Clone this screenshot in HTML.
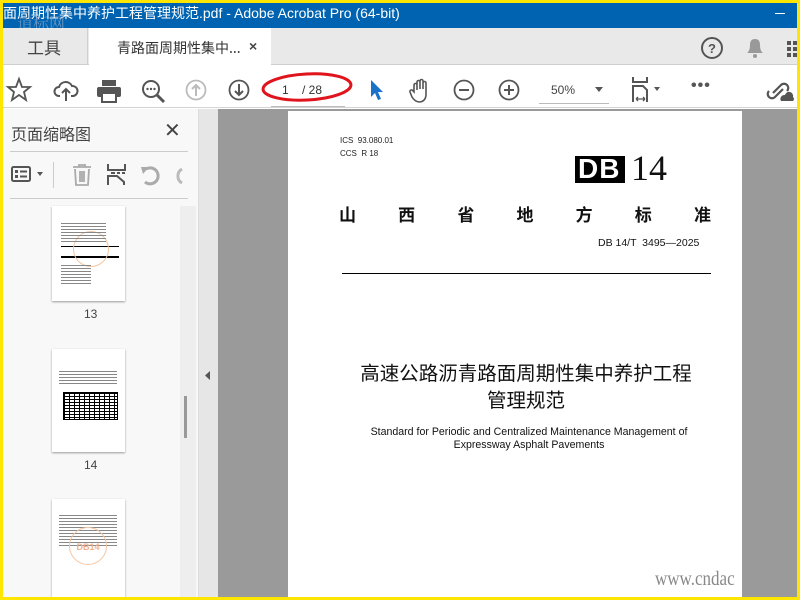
<!DOCTYPE html>
<html><head><meta charset="utf-8"><style>
*{margin:0;padding:0;box-sizing:border-box}
body{width:800px;height:600px;overflow:hidden;background:#ffe600;position:relative;font-family:"Liberation Sans","Noto Sans CJK SC",sans-serif}
.a{position:absolute}
svg{position:absolute;overflow:visible}
.cjk{font-family:"Noto Sans CJK SC","WenQuanYi Zen Hei",sans-serif}
</style></head><body>
<div class="a" style="left:3px;top:3px;width:794px;height:594px;background:#fff;overflow:hidden">
 <div class="a" style="left:0;top:0;width:794px;height:25px;background:#0063b1;color:#fff;font-size:14px;line-height:21px;white-space:nowrap" ><span class="cjk" style="font-size:14px">面周期性集中养护工程管理规范</span>.pdf - Adobe Acrobat Pro (64-bit)</div>
 <div class="a" style="left:14px;top:8px;color:#8ea8c8;font-size:16px;font-family:'Noto Serif CJK SC',serif;opacity:.7">道标网</div>
 <div class="a" style="left:772px;top:10px;width:10px;height:1px;background:#fff"></div>
 <div class="a" style="left:0;top:25px;width:794px;height:37px;background:#e9e9e9;border-bottom:1px solid #cfcfcf"></div>
 <div class="a" style="left:0;top:25px;width:85px;height:37px;border-right:1px solid #d0d0d0"></div>
 <div class="a cjk" style="left:24px;top:31px;font-size:17px;color:#444">工具</div>
 <div class="a" style="left:86px;top:25px;width:182px;height:38px;background:#fff"></div>
 <div class="a cjk" style="left:114px;top:35px;font-size:14px;color:#333">青路面周期性集中...</div>
 <div class="a" style="left:246px;top:35px;font-size:14px;color:#444;font-weight:bold">×</div>
 <svg style="left:698px;top:34px" width="24" height="24"><circle cx="11" cy="11" r="10" fill="none" stroke="#555" stroke-width="2"/><text x="11" y="16" text-anchor="middle" font-size="13" font-weight="bold" fill="#555" font-family="Liberation Sans">?</text></svg>
 <svg style="left:742px;top:34px" width="20" height="22"><path d="M2 16 Q5 14 5 8 Q5 2 10 2 Q15 2 15 8 Q15 14 18 16Z" fill="#999"/><circle cx="10" cy="19" r="2" fill="#999"/></svg>
 <svg style="left:784px;top:38px" width="10" height="16"><rect x="0" y="0" width="4" height="4" fill="#555"/><rect x="6" y="0" width="4" height="4" fill="#555"/><rect x="0" y="6" width="4" height="4" fill="#555"/><rect x="6" y="6" width="4" height="4" fill="#555"/><rect x="0" y="12" width="4" height="4" fill="#555"/><rect x="6" y="12" width="4" height="4" fill="#555"/></svg>
 <div class="a" style="left:0;top:63px;width:794px;height:42px;background:#fff;border-bottom:1px solid #d4d4d4"></div>
 <svg style="left:4px;top:75px" width="26" height="24"><path d="M12 1 L15 9 L23 9 L17 14 L19 22 L12 17 L5 22 L7 14 L1 9 L9 9Z" fill="none" stroke="#555" stroke-width="1.8"/></svg>
 <svg style="left:51px;top:77px" width="24" height="22"><path d="M6 16 H5 A4.5 4.5 0 0 1 5 7 A7 7 0 0 1 18 6 A5 5 0 0 1 19 16 H17" fill="none" stroke="#555" stroke-width="2"/><path d="M12 21 V10 M8 13 L12 9 L16 13" fill="none" stroke="#555" stroke-width="2"/></svg>
 <svg style="left:94px;top:77px" width="24" height="22"><rect x="5" y="0" width="14" height="6" fill="#555"/><rect x="0" y="7" width="24" height="10" rx="2" fill="#555"/><rect x="5" y="13" width="14" height="9" fill="#fff" stroke="#555" stroke-width="2"/></svg>
 <svg style="left:138px;top:76px" width="26" height="26"><circle cx="10" cy="10" r="8" fill="none" stroke="#555" stroke-width="2"/><path d="M16 16 L23 23" stroke="#555" stroke-width="3"/><circle cx="6.5" cy="10" r="1.2" fill="#555"/><circle cx="10" cy="10" r="1.2" fill="#555"/><circle cx="13.5" cy="10" r="1.2" fill="#555"/></svg>
 <svg style="left:183px;top:77px" width="22" height="22"><circle cx="10" cy="10" r="9.5" fill="none" stroke="#bbb" stroke-width="1.8"/><path d="M10 16 V5 M6 9 L10 5 L14 9" fill="none" stroke="#bbb" stroke-width="2"/></svg>
 <svg style="left:226px;top:77px" width="22" height="22"><circle cx="10" cy="10" r="9.5" fill="none" stroke="#555" stroke-width="1.8"/><path d="M10 4 V15 M6 11 L10 15 L14 11" fill="none" stroke="#555" stroke-width="2"/></svg>
 <div class="a" style="left:268px;top:103px;width:74px;height:1px;background:#bbb"></div>
 <div class="a" style="left:279px;top:80px;font-size:12px;color:#333">1</div>
 <div class="a" style="left:299px;top:80px;font-size:12px;color:#333">/ 28</div>
 <svg style="left:258px;top:68px" width="96" height="32"><ellipse cx="46" cy="16" rx="44" ry="13" fill="none" stroke="#e0141c" stroke-width="3" transform="rotate(-3 46 16)"/></svg>
 <svg style="left:366px;top:76px" width="16" height="22"><path d="M2 1 L2 18 L6 14 L9 21 L12 20 L9 13 L14 13Z" fill="#1a73c8"/></svg>
 <svg style="left:406px;top:75px" width="24" height="26"><path d="M5 14 V7 a1.5 1.5 0 0 1 3 0 V12 V4 a1.5 1.5 0 0 1 3 0 V11 V3 a1.5 1.5 0 0 1 3 0 V11 V5 a1.5 1.5 0 0 1 3 0 V16 Q17 23 11 24 Q6 24 3 19 L1 14 a1.5 1.5 0 0 1 3 -1Z" fill="none" stroke="#555" stroke-width="1.6"/></svg>
 <svg style="left:451px;top:77px" width="22" height="22"><circle cx="10" cy="10" r="9.5" fill="none" stroke="#555" stroke-width="1.8"/><path d="M5 10 H15" stroke="#555" stroke-width="2"/></svg>
 <svg style="left:496px;top:77px" width="22" height="22"><circle cx="10" cy="10" r="9.5" fill="none" stroke="#555" stroke-width="1.8"/><path d="M5 10 H15 M10 5 V15" stroke="#555" stroke-width="2"/></svg>
 <div class="a" style="left:548px;top:80px;font-size:12px;color:#444">50%</div>
 <svg style="left:592px;top:84px" width="10" height="6"><path d="M0 0 H8 L4 5Z" fill="#555"/></svg>
 <div class="a" style="left:536px;top:100px;width:70px;height:1px;background:#bbb"></div>
 <svg style="left:629px;top:74px" width="32" height="26"><path d="M1 0 V5 H15 V0" fill="none" stroke="#555" stroke-width="2"/><path d="M1 25 V9 H11 L15 13 V25" fill="none" stroke="#555" stroke-width="2"/><path d="M4 22 H13 M4 22 L6 20 M4 22 L6 24 M13 22 L11 20 M13 22 L11 24" stroke="#555" stroke-width="1.3"/><path d="M22 10 H28 L25 14Z" fill="#555"/></svg>
 <div class="a" style="left:688px;top:74px;font-size:16px;color:#555;letter-spacing:1px;font-weight:bold">•••</div>
 <svg style="left:766px;top:76px" width="26" height="24"><path d="M4 14 L12 6 a4 4 0 0 1 6 6 M14 10 L6 18 a4 4 0 0 1 -6 -6" fill="none" stroke="#555" stroke-width="2.2"/><path d="M12 22 a4 4 0 0 1 4 -6 a4 4 0 0 1 8 2 a2.5 2.5 0 0 1 0 4Z" fill="#555"/></svg>
 <div class="a" style="left:0;top:106px;width:195px;height:488px;background:#f8f8f8"></div>
 <div class="a cjk" style="left:8px;top:118px;font-size:16px;color:#444">页面缩略图</div>
 <div class="a" style="left:161px;top:115px;font-size:20px;color:#444">✕</div>
 <div class="a" style="left:7px;top:148px;width:178px;height:1px;background:#ccc"></div>
 <div class="a" style="left:7px;top:195px;width:178px;height:1px;background:#ccc"></div>
 <div class="a" style="left:50px;top:159px;width:1px;height:26px;background:#ccc"></div>
 <svg style="left:8px;top:163px" width="36" height="18"><rect x="1" y="1" width="18" height="14" rx="1.5" fill="none" stroke="#555" stroke-width="2"/><rect x="4" y="4" width="3" height="3" fill="#555"/><rect x="4" y="9" width="3" height="3" fill="#555"/><path d="M9 5.5 H16 M9 10.5 H16" stroke="#555" stroke-width="2"/><path d="M26 6 H32 L29 10Z" fill="#555"/></svg>
 <svg style="left:69px;top:161px" width="20" height="22"><path d="M1 3 H19 M7 3 V1 H13 V3 M3 5 L4 21 H16 L17 5 M8 7 V18 M10 7 V18 M12 7 V18" fill="none" stroke="#aaa" stroke-width="1.8"/></svg>
 <svg style="left:104px;top:161px" width="20" height="22"><path d="M1 0 V6 H18 V0" fill="none" stroke="#555" stroke-width="2"/><path d="M4 9 H8 M10 9 H13 M15 9 H18" stroke="#555" stroke-width="2"/><path d="M1 21 V12 H10 L17 18 V21" fill="none" stroke="#555" stroke-width="2"/></svg>
 <svg style="left:137px;top:163px" width="22" height="20"><path d="M6 3 A8 8 0 1 1 5 16" fill="none" stroke="#aaa" stroke-width="3"/><path d="M1 1 L9 1 L3 8Z" fill="#aaa"/></svg>
 <svg style="left:170px;top:163px" width="10" height="20"><path d="M9 3 A8 8 0 0 0 9 17" fill="none" stroke="#bbb" stroke-width="3"/></svg>
 <div class="a" style="left:177px;top:203px;width:16px;height:391px;background:#eee"></div>
 <div class="a" style="left:181px;top:393px;width:3px;height:42px;background:#999"></div>
 <div class="a" style="left:49px;top:203px;width:73px;height:95px;background:#fff;box-shadow:0 1px 2px #999"></div>
 <div class="a" style="left:58px;top:243px;width:58px;height:12px;border-top:1px solid #000;border-bottom:2px solid #000"></div>
 <div class="a" style="left:70px;top:228px;width:36px;height:36px;border:1px solid #f3c6a0;border-radius:50%"></div>
 <div class="a" style="left:58px;top:220px;width:45px;height:20px;background:repeating-linear-gradient(#888 0 1px,transparent 1px 3px)"></div>
 <div class="a" style="left:58px;top:262px;width:30px;height:20px;background:repeating-linear-gradient(#888 0 1px,transparent 1px 3px)"></div>
 <div class="a" style="left:81px;top:304px;font-size:12px;color:#444">13</div>
 <div class="a" style="left:49px;top:346px;width:73px;height:103px;background:#fff;box-shadow:0 1px 2px #999"></div>
 <div class="a" style="left:56px;top:368px;width:58px;height:14px;background:repeating-linear-gradient(#888 0 1px,transparent 1px 3px)"></div>
 <div class="a" style="left:60px;top:389px;width:55px;height:28px;background:repeating-linear-gradient(90deg,#000 0 1px,transparent 1px 5px),repeating-linear-gradient(#000 0 1px,#fff 1px 3px);border:1px solid #000"></div>
 <div class="a" style="left:81px;top:455px;font-size:12px;color:#444">14</div>
 <div class="a" style="left:49px;top:496px;width:73px;height:98px;background:#fff;box-shadow:0 1px 2px #999"></div>
 <div class="a" style="left:56px;top:512px;width:58px;height:32px;background:repeating-linear-gradient(#888 0 1px,transparent 1px 3px)"></div>
 <div class="a" style="left:66px;top:524px;width:38px;height:38px;border:1px solid #f3c6a0;border-radius:50%;color:#f0b090;font-size:9px;font-weight:bold;text-align:center;line-height:38px">DB14</div>
 <div class="a" style="left:195px;top:106px;width:20px;height:488px;background:#e6e6e6;border-left:1px solid #ddd"></div>
 <svg style="left:202px;top:368px" width="6" height="10"><path d="M5 0 V9 L0 4.5Z" fill="#555"/></svg>
 <div class="a" style="left:215px;top:106px;width:579px;height:488px;background:#9a9a9a"></div>
 <div class="a" style="left:285px;top:108px;width:454px;height:486px;background:#fff"></div>
 <div class="a" style="left:337px;top:131px;font-size:8px;color:#222;line-height:13px">ICS &nbsp;93.080.01<br>CCS &nbsp;R 18</div>
 <div class="a" style="left:572px;top:153px;width:25px;height:27px;background:#000"></div>
 <div class="a" style="left:597px;top:153px;width:25px;height:27px;background:#000"></div>
 <div class="a" style="left:575px;top:150px;font-size:28px;font-weight:bold;color:#fff;letter-spacing:1px">DB</div>
 <div class="a" style="left:628px;top:144px;font-size:36px;color:#111;font-family:'Liberation Serif',serif">14</div>
 <div class="a cjk" style="left:336px;top:198px;width:372px;display:flex;justify-content:space-between;font-size:17px;font-weight:bold;color:#111"><span>山</span><span>西</span><span>省</span><span>地</span><span>方</span><span>标</span><span>准</span></div>
 <div class="a" style="left:595px;top:234px;font-size:10.5px;color:#111">DB 14/T &nbsp;3495—2025</div>
 <div class="a" style="left:339px;top:270px;width:369px;height:1px;background:#000"></div>
 <div class="a cjk" style="left:296px;top:355px;width:454px;text-align:center;font-size:19.5px;color:#111;line-height:27px">高速公路沥青路面周期性集中养护工程<br>管理规范</div>
 <div class="a" style="left:299px;top:423px;width:454px;text-align:center;font-size:10.6px;color:#111;line-height:13px">Standard for Periodic and Centralized Maintenance Management of<br>Expressway Asphalt Pavements</div>
 <div class="a" style="left:652px;top:565px;font-size:20px;color:#888;font-family:'Liberation Serif',serif;transform:scaleX(.85);transform-origin:left">www.cndac</div>
 <div class="a" style="left:739px;top:560px;width:55px;height:34px;background:#9a9a9a"></div>
</div>
</body></html>
